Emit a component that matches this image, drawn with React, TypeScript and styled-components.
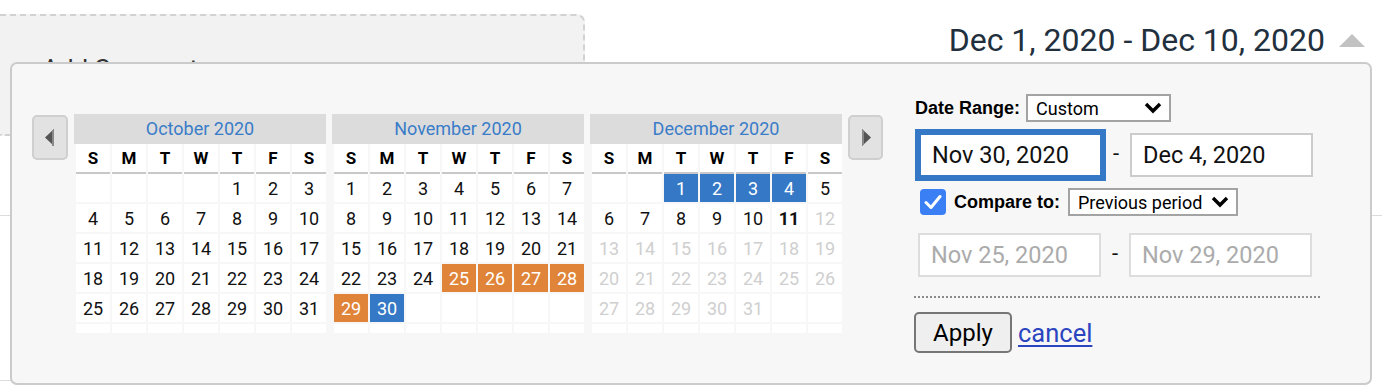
import React from "react";
import styled, { createGlobalStyle } from "styled-components";

const Global = createGlobalStyle`
  html, body { margin: 0; padding: 0; background: #fff; }
  body { font-family: Roboto, "Liberation Sans", Arial, sans-serif; }
  * { box-sizing: border-box; }
`;

const Page = styled.div`
  position: relative;
  width: 1382px;
  height: 392px;
  overflow: hidden;
  background: #fff;
`;

const TopBar = styled.div`
  display: flex;
  justify-content: space-between;
  align-items: flex-start;
  padding-top: 14px;
`;

const SegmentBox = styled.div`
  width: 585px;
  height: 122px;
  background: #f2f2f2;
  border: 2px dashed #d2d2d2;
  border-left: none;
  border-radius: 0 8px 8px 0;
  padding: 40px 0 0 42px;
  font-size: 26px;
  line-height: 26px;
  color: #333;
`;

const RangeToggle = styled.div`
  display: flex;
  align-items: center;
  gap: 14px;
  margin-top: 10px;
  margin-right: 17px;
  font-size: 32px;
  line-height: 32px;
  color: #22303e;
`;

const Divider = styled.div<{ $top: number; $width?: string }>`
  margin-top: ${(p) => p.$top}px;
  width: ${(p) => p.$width || "100%"};
  border-top: 1px solid #dcdcdc;
`;

const Popup = styled.div`
  position: absolute;
  left: 10px;
  top: 62px;
  width: 1362px;
  height: 323px;
  background: #f7f7f7;
  border: 2px solid #cbcbcb;
  border-radius: 7px;
  display: flex;
  align-items: flex-start;
  padding-left: 20px;
`;

const Calendars = styled.div`
  display: flex;
  align-items: flex-start;
  gap: 6px;
  margin-top: 50px;
`;

const NavButton = styled.div<{ $w: number }>`
  width: ${(p) => p.$w}px;
  height: 45px;
  margin-top: 1px;
  background: #e2e2e2;
  border: 2px solid #cfcfcf;
  border-radius: 5px;
  display: flex;
  align-items: center;
  justify-content: center;
`;

const Month = styled.div`
  width: 252px;
`;

const MonthTitle = styled.div`
  height: 30px;
  background: #dcdcdc;
  color: #3a7cc8;
  font-size: 18px;
  line-height: 29px;
  text-align: center;
`;

const Grid = styled.div`
  display: grid;
  grid-template-columns: repeat(7, 34px);
  column-gap: 2px;
  padding-left: 2px;
`;

const DayNames = styled(Grid)``;

const DayName = styled.div`
  height: 30px;
  background: #fff;
  border-bottom: 2px solid #c8c8c8;
  font-weight: 700;
  font-size: 17px;
  line-height: 29px;
  text-align: center;
  color: #000;
`;

const Days = styled(Grid)`
  grid-template-rows: repeat(5, 28px) 9px;
  row-gap: 2px;
`;

type Variant = "normal" | "empty" | "orange" | "blue" | "disabled" | "today";

const bg: Record<Variant, string> = {
  normal: "#fff",
  empty: "#fff",
  orange: "#e0843a",
  blue: "#3478c6",
  disabled: "#fff",
  today: "#fff",
};
const fg: Record<Variant, string> = {
  normal: "#111",
  empty: "#111",
  orange: "#fff",
  blue: "#fff",
  disabled: "#cfcfcf",
  today: "#111",
};

const Day = styled.div<{ $v: Variant }>`
  background: ${(p) => bg[p.$v]};
  color: ${(p) => fg[p.$v]};
  font-weight: ${(p) => (p.$v === "today" ? 700 : 400)};
  font-size: 18px;
  line-height: 29px;
  text-align: center;
`;

const RightPanel = styled.div`
  margin-left: 31px;
  margin-top: 30px;
  width: 406px;
  display: flex;
  flex-direction: column;
`;

const Row = styled.div<{ $mt?: number; $pl?: number }>`
  display: flex;
  align-items: center;
  margin-top: ${(p) => p.$mt || 0}px;
  padding-left: ${(p) => p.$pl || 0}px;
`;

const Label = styled.span`
  font-family: "Liberation Sans", Arial, sans-serif;
  font-weight: 700;
  font-size: 18px;
  color: #000;
  margin-left: 1px;
`;

const Select = styled.div<{ $w: number; $ml: number }>`
  width: ${(p) => p.$w}px;
  height: 28px;
  margin-left: ${(p) => p.$ml}px;
  background: #fff;
  border: 2px solid #a3a3a3;
  display: flex;
  align-items: center;
  justify-content: space-between;
  padding: 0 7px 0 8px;
  font-size: 18px;
  color: #000;
`;

const DateInput = styled.div<{ $focus?: boolean; $muted?: boolean }>`
  width: 183px;
  height: 44px;
  background: #fff;
  border: 2px solid ${(p) => (p.$focus ? "#3478c6" : p.$muted ? "#dddddd" : "#cccccc")};
  box-shadow: ${(p) => (p.$focus ? "0 0 0 4px #3478c6" : "none")};
  padding-left: 11px;
  font-size: 23.5px;
  line-height: 40px;
  color: ${(p) => (p.$muted ? "#ababab" : "#111")};
`;

const Dash = styled.span`
  width: 28px;
  text-align: center;
  font-size: 22px;
  color: #111;
  position: relative;
  top: -2px;
`;

const Checkbox = styled.div`
  width: 26px;
  height: 26px;
  border-radius: 4px;
  background: #3b7ff5;
  display: flex;
  align-items: center;
  justify-content: center;
  margin-left: 6px;
  margin-right: 7px;
`;

const DottedRule = styled.div`
  margin-top: 19px;
  width: 406px;
  border-top: 2px dotted #8a8a8a;
`;

const ApplyButton = styled.button`
  width: 98px;
  height: 41px;
  background: #efefef;
  border: 2px solid #767676;
  border-radius: 5px;
  font-family: Roboto, sans-serif;
  font-size: 24px;
  color: #000;
  padding: 0;
`;

const CancelLink = styled.a`
  margin-left: 6px;
  font-size: 25.5px;
  color: #2b44bf;
  text-decoration: underline;
  text-underline-offset: 3px;
  cursor: pointer;
`;

const Chevron = () => (
  <svg width="18" height="12" viewBox="0 0 18 12">
    <polyline points="2,2 9,9 16,2" fill="none" stroke="#000" strokeWidth="3.4" strokeLinejoin="miter" />
  </svg>
);

const NavArrow = ({ dir }: { dir: "left" | "right" }) => (
  <svg width="10" height="17" viewBox="0 0 10 17">
    {dir === "left" ? (
      <>
        <polygon points="9,0 0,8.5 9,17" fill="#555" />
        <polygon points="9,0 9,17 7,17 7,2" fill="#888" />
      </>
    ) : (
      <>
        <polygon points="1,0 10,8.5 1,17" fill="#555" />
        <polygon points="1,0 1,17 3,15 3,2" fill="#888" />
      </>
    )}
  </svg>
);

type Cell = { d?: number; v: Variant };

function buildMonth(startDow: number, len: number, style: (d: number) => Variant): Cell[] {
  const cells: Cell[] = [];
  for (let i = 0; i < startDow; i++) cells.push({ v: "empty" });
  for (let d = 1; d <= len; d++) cells.push({ d, v: style(d) });
  while (cells.length < 42) cells.push({ v: "empty" });
  return cells;
}

const months = [
  { title: "October 2020", cells: buildMonth(4, 31, () => "normal") },
  {
    title: "November 2020",
    cells: buildMonth(0, 30, (d) => (d >= 25 && d <= 29 ? "orange" : d === 30 ? "blue" : "normal")),
  },
  {
    title: "December 2020",
    cells: buildMonth(2, 31, (d) => (d <= 4 ? "blue" : d < 11 ? "normal" : d === 11 ? "today" : "disabled")),
  },
];

const dayNames = ["S", "M", "T", "W", "T", "F", "S"];

export default function App() {
  return (
    <Page>
      <Global />
      <TopBar>
        <SegmentBox>Add Segment</SegmentBox>
        <RangeToggle>
          <span>Dec 1, 2020 - Dec 10, 2020</span>
          <svg width="26" height="13" viewBox="0 0 26 13">
            <polygon points="0,13 13,0 26,13" fill="#c2c2c2" />
          </svg>
        </RangeToggle>
      </TopBar>
      <Divider $top={79} />
      <Divider $top={164} $width="600px" />

      <Popup>
        <Calendars>
          <NavButton $w={36}>
            <NavArrow dir="left" />
          </NavButton>
          {months.map((m) => (
            <Month key={m.title}>
              <MonthTitle>{m.title}</MonthTitle>
              <DayNames>
                {dayNames.map((n, i) => (
                  <DayName key={i}>{n}</DayName>
                ))}
              </DayNames>
              <Days>
                {m.cells.map((c, i) => (
                  <Day key={i} $v={c.v}>
                    {c.d ?? ""}
                  </Day>
                ))}
              </Days>
            </Month>
          ))}
          <NavButton $w={35}>
            <NavArrow dir="right" />
          </NavButton>
        </Calendars>

        <RightPanel>
          <Row>
            <Label>Date Range:</Label>
            <Select $w={145} $ml={6}>
              <span>Custom</span>
              <Chevron />
            </Select>
          </Row>
          <Row $mt={11} $pl={5}>
            <DateInput $focus>Nov 30, 2020</DateInput>
            <Dash>-</Dash>
            <DateInput>Dec 4, 2020</DateInput>
          </Row>
          <Row $mt={11}>
            <Checkbox>
              <svg width="18" height="16" viewBox="0 0 18 16">
                <polyline points="2,8.5 7,13.5 16,2.5" fill="none" stroke="#fff" strokeWidth="3" strokeLinecap="round" strokeLinejoin="round" />
              </svg>
            </Checkbox>
            <Label>Compare to:</Label>
            <Select $w={170} $ml={8}>
              <span>Previous period</span>
              <Chevron />
            </Select>
          </Row>
          <Row $mt={17} $pl={4}>
            <DateInput $muted>Nov 25, 2020</DateInput>
            <Dash>-</Dash>
            <DateInput $muted>Nov 29, 2020</DateInput>
          </Row>
          <DottedRule />
          <Row $mt={14}>
            <ApplyButton>Apply</ApplyButton>
            <CancelLink>cancel</CancelLink>
          </Row>
        </RightPanel>
      </Popup>
    </Page>
  );
}
